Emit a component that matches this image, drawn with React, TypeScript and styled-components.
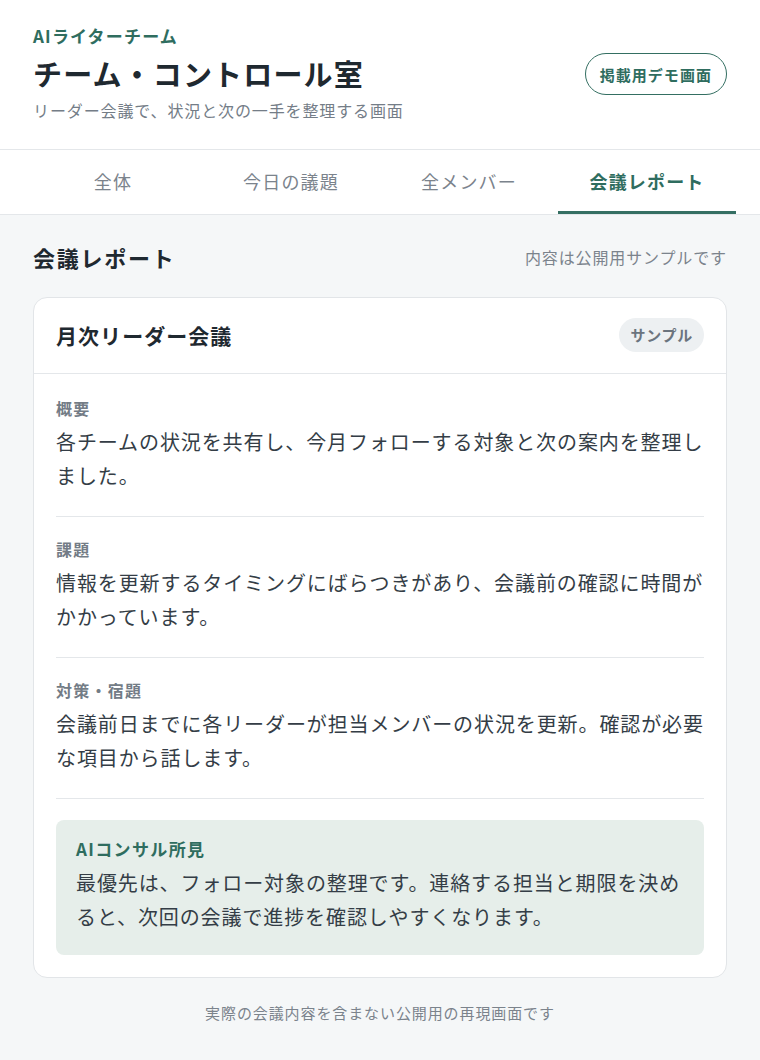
import React, { useState } from "react";
import styled, { createGlobalStyle } from "styled-components";

const GlobalStyle = createGlobalStyle`
  html, body {
    margin: 0;
    padding: 0;
    background: #f5f7f8;
  }
  body {
    font-family: "Noto Sans CJK JP", "Noto Sans", sans-serif;
    color: #27313a;
  }
  * { box-sizing: border-box; }
`;

const Page = styled.div`
  width: 760px;
  min-height: 1060px;
  background: #f5f7f8;
`;

const Header = styled.header`
  display: flex;
  align-items: center;
  justify-content: space-between;
  padding: 24px 33px 27px;
  background: #ffffff;
  border-bottom: 1px solid #e4e7ea;
`;

const HeaderText = styled.div`
  display: flex;
  flex-direction: column;
`;

const TeamLabel = styled.div`
  font-size: 17px;
  line-height: 24px;
  font-weight: 700;
  color: #2f6d5f;
  letter-spacing: 0.07em;
`;

const Title = styled.h1`
  margin: 5px 0 0;
  font-size: 29px;
  line-height: 40px;
  font-weight: 700;
  color: #1f2930;
  letter-spacing: 0.04em;
`;

const Subtitle = styled.p`
  margin: 5px 0 0;
  font-size: 16px;
  line-height: 24px;
  color: #747d87;
  letter-spacing: 0.055em;
`;

const DemoButton = styled.button`
  height: 42px;
  margin-top: 2px;
  padding: 0 14px;
  border: 1.5px solid #346f62;
  border-radius: 21px;
  background: #ffffff;
  color: #2f6d5f;
  font-family: inherit;
  font-size: 15px;
  font-weight: 700;
  letter-spacing: 0.07em;
  cursor: pointer;
`;

const Tabs = styled.nav`
  display: grid;
  grid-template-columns: repeat(4, 1fr);
  padding: 0 24px;
  background: #ffffff;
  border-bottom: 1px solid #e4e7ea;
`;

const Tab = styled.button<{ $active?: boolean }>`
  height: 64px;
  border: none;
  background: transparent;
  font-family: inherit;
  font-size: 18px;
  letter-spacing: 0.065em;
  font-weight: ${(p) => (p.$active ? 700 : 400)};
  color: ${(p) => (p.$active ? "#2f6d5f" : "#7b838c")};
  border-bottom: 3px solid ${(p) => (p.$active ? "#356f63" : "transparent")};
  padding: 1px 0 0;
  cursor: pointer;
`;

const Main = styled.main`
  padding: 26px 33px 0;
`;

const SectionHead = styled.div`
  display: flex;
  align-items: center;
  justify-content: space-between;
  height: 32px;
`;

const SectionTitle = styled.h2`
  margin: 0;
  font-size: 22px;
  font-weight: 700;
  color: #1f2930;
  letter-spacing: 0.08em;
`;

const SectionNote = styled.span`
  font-size: 16px;
  color: #7b838c;
  letter-spacing: 0.055em;
`;

const Card = styled.section`
  margin-top: 24px;
  background: #ffffff;
  border: 1px solid #e2e5e8;
  border-radius: 14px;
`;

const CardHeader = styled.div`
  display: flex;
  align-items: center;
  justify-content: space-between;
  height: 76px;
  padding: 0 22px 2px;
  border-bottom: 1px solid #e4e7ea;
`;

const CardTitle = styled.h3`
  margin: 0;
  font-size: 21px;
  font-weight: 700;
  color: #1f2930;
  letter-spacing: 0.05em;
`;

const Badge = styled.span`
  display: inline-flex;
  align-items: center;
  height: 34px;
  padding: 0 11px;
  border-radius: 17px;
  background: #edf0f2;
  color: #6b747e;
  font-size: 15px;
  font-weight: 700;
  letter-spacing: 0.05em;
`;

const CardBody = styled.div`
  padding: 2px 22px 22px;
`;

const Block = styled.div`
  padding: 20px 0 23px;
  border-bottom: 1px solid #e4e7ea;
`;

const BlockLabel = styled.div`
  font-size: 16px;
  line-height: 24px;
  font-weight: 700;
  color: #737c86;
  letter-spacing: 0.08em;
  word-spacing: 0.3em;
`;

const BlockText = styled.p`
  margin: 5px 0 0;
  font-size: 20px;
  line-height: 34px;
  color: #343d46;
  letter-spacing: 0.045em;
`;

const Insight = styled.div`
  margin-top: 21px;
  padding: 17px 20px 21px;
  background: #e6eeea;
  border-radius: 8px;
`;

const InsightLabel = styled.div`
  font-size: 17px;
  line-height: 24px;
  font-weight: 700;
  color: #2f6d5f;
  letter-spacing: 0.08em;
`;

const Footer = styled.footer`
  margin-top: 24px;
  padding-bottom: 30px;
  text-align: center;
  font-size: 15px;
  line-height: 22px;
  color: #7b838c;
  letter-spacing: 0.06em;
`;

const tabs = ["全体", "今日の議題", "全メンバー", "会議レポート"];

const blocks = [
  {
    label: "概要",
    text: "各チームの状況を共有し、今月フォローする対象と次の案内を整理しました。",
  },
  {
    label: "課題",
    text: "情報を更新するタイミングにばらつきがあり、会議前の確認に時間がかかっています。",
  },
  {
    label: "対策・宿題",
    text: "会議前日までに各リーダーが担当メンバーの状況を更新。確認が必要な項目から話します。",
  },
];

export default function App() {
  const [active, setActive] = useState(3);
  return (
    <>
      <GlobalStyle />
      <Page>
        <Header>
          <HeaderText>
            <TeamLabel>AIライターチーム</TeamLabel>
            <Title>チーム・コントロール室</Title>
            <Subtitle>リーダー会議で、状況と次の一手を整理する画面</Subtitle>
          </HeaderText>
          <DemoButton>掲載用デモ画面</DemoButton>
        </Header>
        <Tabs>
          {tabs.map((t, i) => (
            <Tab key={t} $active={i === active} onClick={() => setActive(i)}>
              {t}
            </Tab>
          ))}
        </Tabs>
        <Main>
          <SectionHead>
            <SectionTitle>会議レポート</SectionTitle>
            <SectionNote>内容は公開用サンプルです</SectionNote>
          </SectionHead>
          <Card>
            <CardHeader>
              <CardTitle>月次リーダー会議</CardTitle>
              <Badge>サンプル</Badge>
            </CardHeader>
            <CardBody>
              {blocks.map((b) => (
                <Block key={b.label}>
                  <BlockLabel>{b.label}</BlockLabel>
                  <BlockText>{b.text}</BlockText>
                </Block>
              ))}
              <Insight>
                <InsightLabel>AIコンサル所見</InsightLabel>
                <BlockText>
                  最優先は、フォロー対象の整理です。連絡する担当と期限を決めると、次回の会議で進捗を確認しやすくなります。
                </BlockText>
              </Insight>
            </CardBody>
          </Card>
          <Footer>実際の会議内容を含まない公開用の再現画面です</Footer>
        </Main>
      </Page>
    </>
  );
}
